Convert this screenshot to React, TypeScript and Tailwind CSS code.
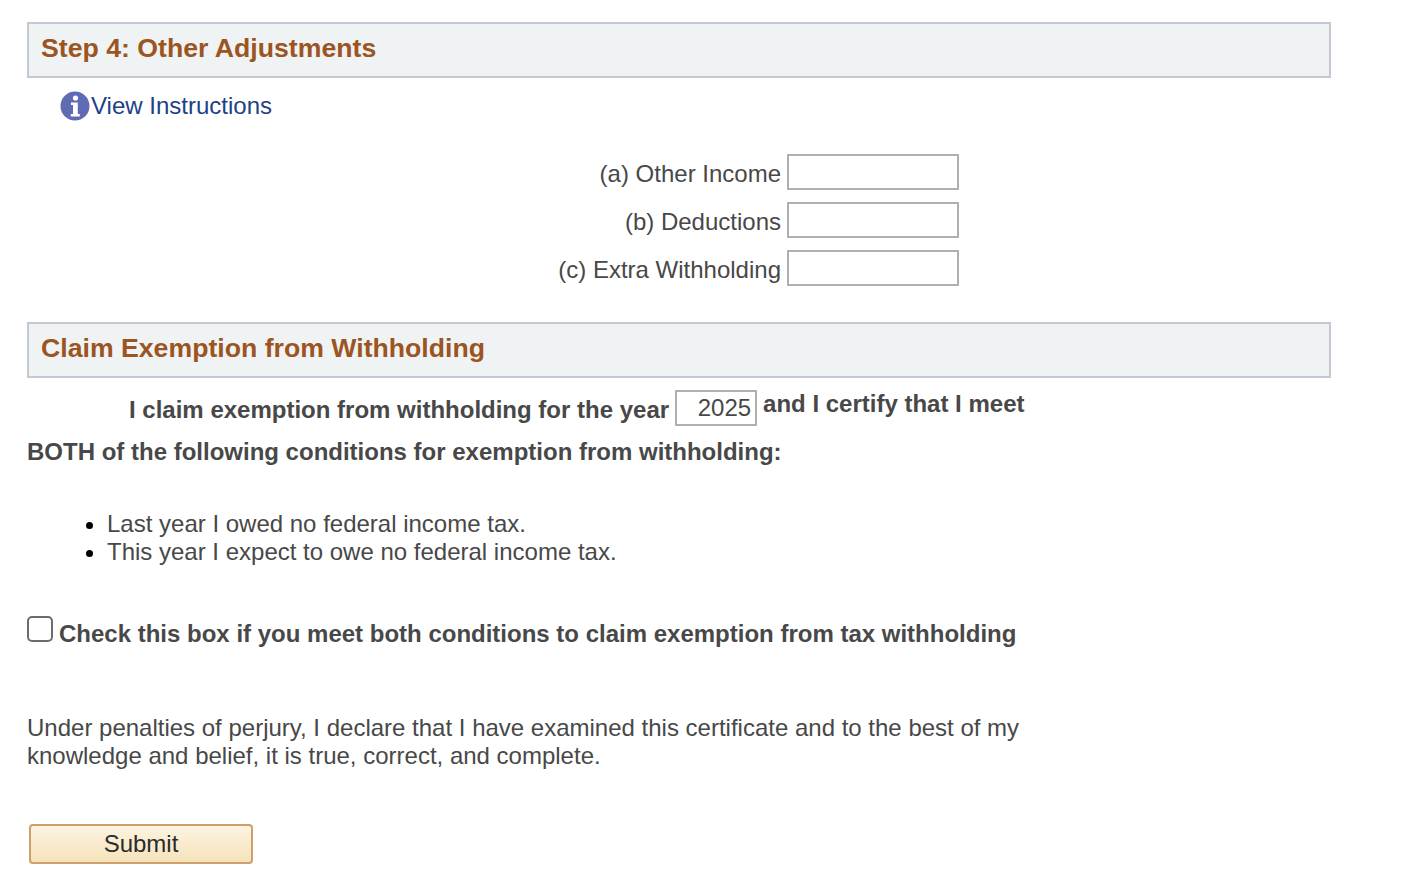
// Step 4 / claim exemption section of the withholding form
const FIELDS = [
  { label: "(a) Other Income" },
  { label: "(b) Deductions" },
  { label: "(c) Extra Withholding" },
];

function SectionHeader({ title }: { title: string }) {
  return (
    <div className="flex h-[56px] w-[1304px] items-center border-2 border-[#c3c8d3] bg-[#eff3f4] pb-[4px] pl-[12px]">
      <h2 className="text-[26.67px] leading-none font-bold text-[#9c5522]">{title}</h2>
    </div>
  );
}

function InfoIcon() {
  return (
    <svg width="30" height="30" viewBox="0 0 30 30" className="shrink-0">
      <circle cx="15" cy="15" r="14.5" fill="#5f6cb4" />
      <circle cx="15.5" cy="7" r="2.6" fill="#fff" />
      <path d="M11 11.5h6.8V23h2v2.5h-9V23h2.2v-9H11z" fill="#fff" />
    </svg>
  );
}

export default function App() {
  return (
    <div className="h-[876px] w-[1416px] overflow-hidden bg-white pt-[22px] pl-[27px] font-['Liberation_Sans',Arial,sans-serif] text-[24px] leading-[28px] text-[#484848]">
      <SectionHeader title="Step 4: Other Adjustments" />

      <a className="mt-[13px] ml-[33px] flex h-[30px] items-center gap-[1px] text-[#1d4286]">
        <InfoIcon />
        <span>View Instructions</span>
      </a>

      <div className="mt-[33px] flex flex-col gap-[12px]">
        {FIELDS.map((f) => (
          <div key={f.label} className="flex h-[36px] items-center">
            <label className="w-[760px] pt-[4px] pr-[6px] text-right">{f.label}</label>
            <input type="text" className="h-[36px] w-[172px] border-2 border-[#b0b0b0] bg-white outline-none" />
          </div>
        ))}
      </div>

      <div className="mt-[36px]">
        <SectionHeader title="Claim Exemption from Withholding" />
      </div>

      <div className="mt-[12px] flex h-[36px] items-start pl-[102px] font-bold">
        <span className="mt-[6px]">I claim exemption from withholding for the year</span>
        <input
          type="text"
          readOnly
          value="2025"
          className="mx-[6px] h-[36px] w-[82px] border-2 border-[#b0b0b0] bg-white pr-[4px] text-right font-normal outline-none"
        />
        <span>and I certify that I meet</span>
      </div>
      <p className="mt-[12px] font-bold">BOTH of the following conditions for exemption from withholding:</p>

      <ul className="mt-[44px] list-disc pl-[80px] marker:text-black">
        <li>Last year I owed no federal income tax.</li>
        <li>This year I expect to owe no federal income tax.</li>
      </ul>

      <div className="mt-[48px] flex h-[36px] items-start font-bold">
        <span className="mt-[2px] block size-[26px] shrink-0 rounded-[5px] border-2 border-[#6d6d6d] bg-white" />
        <span className="mt-[6px] ml-[6px]">Check this box if you meet both conditions to claim exemption from tax withholding</span>
      </div>

      <p className="mt-[64px] w-[1010px]">
        Under penalties of perjury, I declare that I have examined this certificate and to the best of my knowledge and belief, it is true, correct, and complete.
      </p>

      <button className="mt-[54px] ml-[2px] block h-[40px] w-[224px] rounded-[4px] border-2 border-[#cd9f6c] bg-gradient-to-b from-[#fcf3e1] to-[#f6e3bb] text-[#2b2b2b]">
        Submit
      </button>
    </div>
  );
}
